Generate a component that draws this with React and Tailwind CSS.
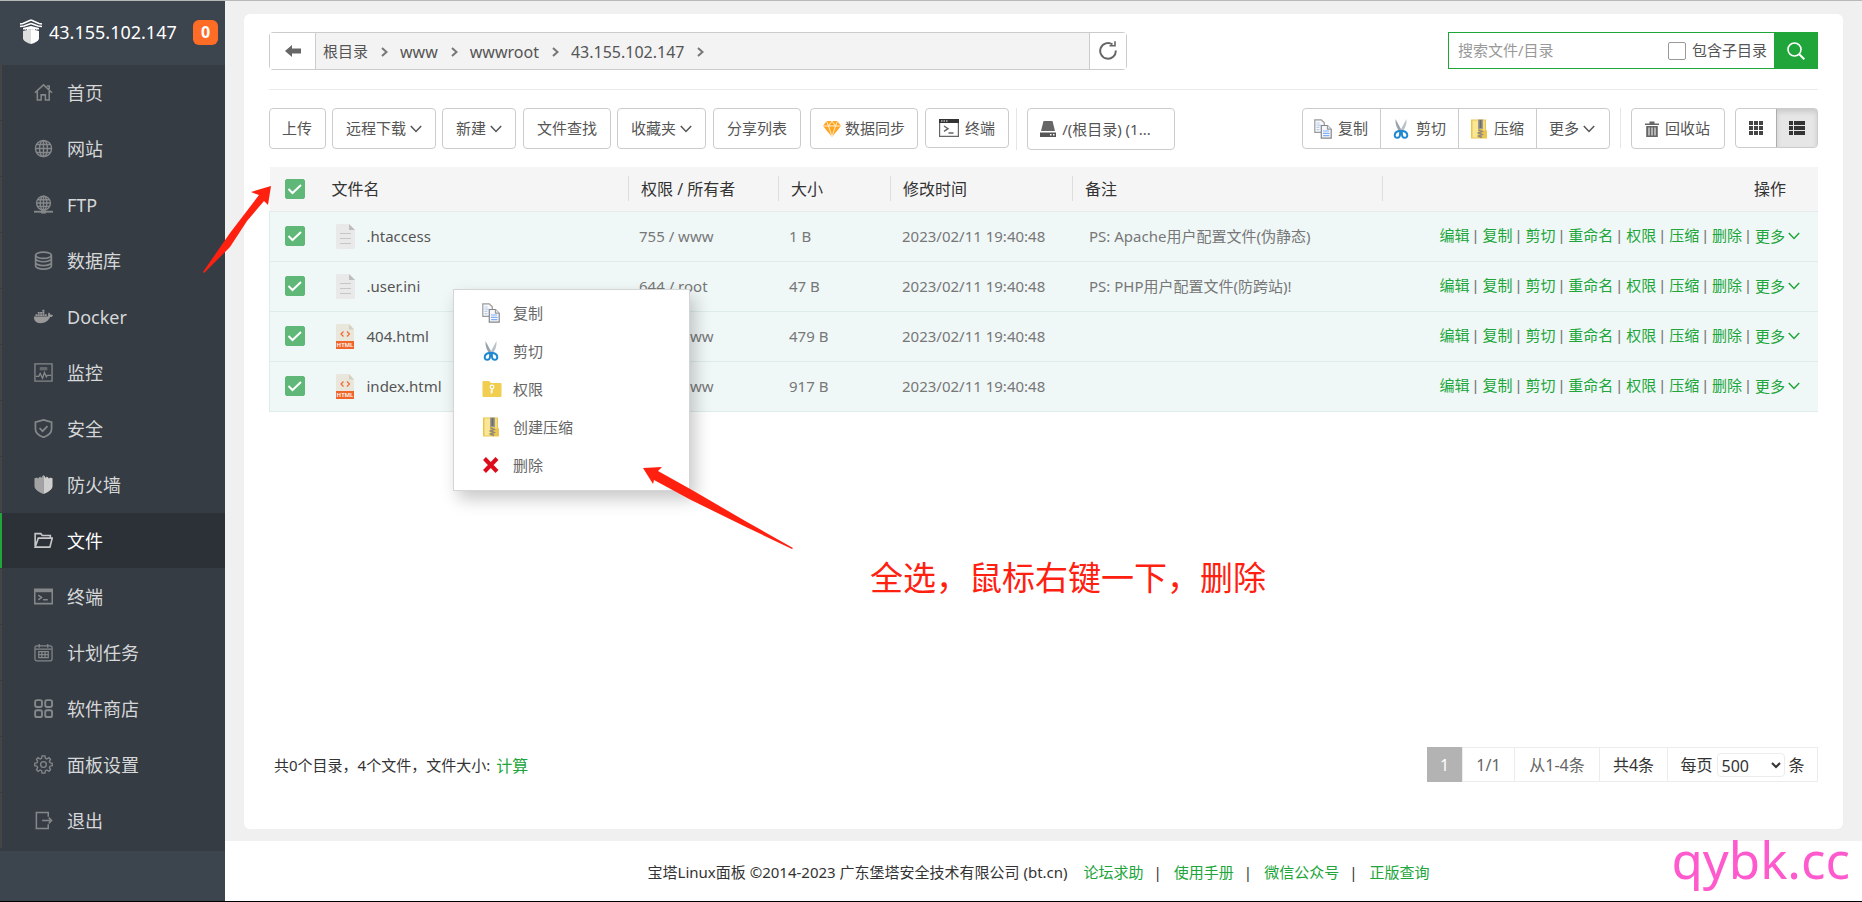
import { useState } from "react";
import clsx from "clsx";
import { FaDocker } from "react-icons/fa";

const line = { fill: "none", stroke: "currentColor", strokeWidth: 1.6 };

const menuIcons = {
  home: (
    <g {...line}>
      <path d="M1 10.2 10 2l9 8.2M3.500 8.500V18h4v-5.500h4.500V18h4V8.500M13.500 3.200h2.500v3" />
    </g>
  ),
  globe: (
    <g {...line} strokeWidth="1.500">
      <circle cx="10" cy="10" r="8.500" />
      <ellipse cx="10" cy="10" rx="4.200" ry="8.500" />
      <path d="M10 1.500v17M1.500 10h17M2.800 5.800h14.400M2.800 14.200h14.400" />
    </g>
  ),
  ftp: (
    <g {...line} strokeWidth="1.500">
      <circle cx="10" cy="8.500" r="7.300" />
      <ellipse cx="10" cy="8.500" rx="3.500" ry="7.300" />
      <path d="M10 1.200v15M2.700 8.500h14.600M3.800 5h12.400M3.800 12h12.400" />
      <path d="M0 17.600h20" strokeWidth="2" />
      <path d="M7.500 17.800h5" strokeWidth="3.500" />
    </g>
  ),
  database: (
    <g {...line} strokeWidth="1.800">
      <ellipse cx="10" cy="4.500" rx="8.300" ry="3.300" />
      <path d="M1.700 4.500v11.200c0 1.800 3.700 3.300 8.300 3.300s8.300-1.500 8.300-3.300V4.500M1.700 8c0 1.800 3.700 3.300 8.300 3.300s8.300-1.500 8.300-3.300M1.700 12c0 1.800 3.700 3.300 8.300 3.300s8.300-1.500 8.300-3.300" />
    </g>
  ),
  monitor: (
    <g {...line} strokeWidth="1.400">
      <path d="M1 1h18v18H1zM2 14h3l1.500-3 2.500 5 2-6 2 4.500 1-1.500h4" />
      <path d="M6 6h8" strokeWidth="3.500" opacity=".6" />
    </g>
  ),
  shield: (
    <g {...line} strokeWidth="1.800">
      <path d="M10 1 18.500 3.300v7.200c0 4-3.400 7-8.500 8.800-5.100-1.800-8.500-4.800-8.500-8.800V3.300zM5.800 9.500l3.200 3.300 5.200-5.300" />
    </g>
  ),
  firewall: (
    <>
      <path d="M10 0 8.500 1.500v1H7v-1l-2 1v1H3.500v-1L.500 3.500v8.500C1 15.500 6 18.500 10 20z" fill="#a3a3a3" />
      <path d="m10 0 1.500 1.500v1H13v-1l2 1v1h1.500v-1l3 1v8.500C19 15.500 14 18.500 10 20z" fill="#cfcfcf" />
    </>
  ),
  folder: (
    <g {...line} strokeWidth="1.700">
      <path d="M1.200 16V2.800h6l1.500 2h8.500v2.700M1.200 17 4.500 7.500h14.700L16.700 17H2z" />
    </g>
  ),
  terminal: (
    <g {...line}>
      <path d="M.8 2.500h18.400v15H.8z" />
      <path d="M1 4.200h18" strokeWidth="2.600" />
      <path d="m4.500 8.500 3.500 2.500-3.500 2.500M9.500 13.500h5" />
    </g>
  ),
  calendar: (
    <g {...line} strokeWidth="1.300">
      <rect x="1" y="3" width="18" height="15.800" rx="2" />
      <path d="M1.500 6.500h17M5.500 1v4M14.500 1v4M5 9h10v6.500H5zM5 12.200h10M8.300 9v6.500M11.700 9v6.500" />
    </g>
  ),
  store: (
    <g {...line} strokeWidth="2">
      <rect x="1.200" y="1.200" width="7.200" height="7.200" rx="2" />
      <rect x="11.800" y="1.200" width="7.200" height="7.200" rx="2" />
      <rect x="1.200" y="11.800" width="7.200" height="7.200" rx="2" />
      <rect x="11.800" y="11.800" width="7.200" height="7.200" rx="2" />
    </g>
  ),
  gear: (
    <g {...line} strokeWidth="1.400">
      <path d="m8.500 1-.5 2.500-1.500.7-2.200-1.400-1.700 1.700 1.200 2.200-.6 1.500L.800 8.700v2.600l2.400.5.6 1.500-1.200 2.200 1.700 1.700 2.200-1.400 1.500.7.5 2.500h3l.5-2.500 1.500-.7 2.200 1.400 1.700-1.700-1.200-2.200.6-1.500 2.400-.5V8.700l-2.400-.5-.6-1.500 1.200-2.200-1.700-1.700-2.200 1.400-1.500-.7-.5-2.500z" />
      <circle cx="10" cy="10" r="3" />
    </g>
  ),
  logout: (
    <g {...line}>
      <path d="M15 6V1.500H2.500v17H15V14M8.500 10H18M15.500 7l3 3-3 3" />
    </g>
  ),
};

const menu = [
  { icon: "home", text: "首页" },
  { icon: "globe", text: "网站" },
  { icon: "ftp", text: "FTP" },
  { icon: "database", text: "数据库" },
  { icon: "docker", text: "Docker" },
  { icon: "monitor", text: "监控" },
  { icon: "shield", text: "安全" },
  { icon: "firewall", text: "防火墙" },
  { icon: "folder", text: "文件" },
  { icon: "terminal", text: "终端" },
  { icon: "calendar", text: "计划任务" },
  { icon: "store", text: "软件商店" },
  { icon: "gear", text: "面板设置" },
  { icon: "logout", text: "退出" },
];

const files = [
  { name: ".htaccess", type: "text", owner: "755 / www", size: "1 B", time: "2023/02/11 19:40:48", ps: "PS: Apache用户配置文件(伪静态)" },
  { name: ".user.ini", type: "text", owner: "644 / root", size: "47 B", time: "2023/02/11 19:40:48", ps: "PS: PHP用户配置文件(防跨站)!" },
  { name: "404.html", type: "html", owner: "755 / www", size: "479 B", time: "2023/02/11 19:40:48", ps: "" },
  { name: "index.html", type: "html", owner: "755 / www", size: "917 B", time: "2023/02/11 19:40:48", ps: "" },
];

const actions = ["编辑", "复制", "剪切", "重命名", "权限", "压缩", "删除"];
const crumbs = ["根目录", "www", "wwwroot", "43.155.102.147"];
const footerLinks = ["论坛求助", "使用手册", "微信公众号", "正版查询"];

const Down = ({ className = "" }) => (
  <svg viewBox="0 0 12 8" className={clsx("h-2 w-3 shrink-0", className)} fill="none" stroke="currentColor" strokeWidth="1.500">
    <path d="m.8 1 5.200 5.500L11.200 1" />
  </svg>
);

const CopyIcon = () => (
  <svg viewBox="0 0 18 20" className="h-5 w-[18px] shrink-0" fill="#f6f8fc" stroke="#9a9a9a" strokeWidth="1.200">
    <path d="M.8.800h6.500l3 3v9.500H.8z" />
    <path d="M2.500 4h3M2.500 6.200h4M2.500 8.400h3M2.500 10.600h3" stroke="#b9cdf0" />
    <path d="M7.300 6.500h6.200l3.700 3.700v9H7.300z" stroke="#858585" />
    <path d="M13.500 6.500v3.700h3.700" />
    <path d="M9 12h6M9 14.300h6.500M9 16.600h6.500" stroke="#7fb0f5" />
  </svg>
);

const CutIcon = () => (
  <svg viewBox="0 0 18 20" className="h-5 w-[18px] shrink-0" fill="none">
    <path d="m3.500 0 6.500 12-2 1.500C5 9.500 3 5 3.500 0z" fill="#98a3ac" />
    <path d="M14.500 0 8 12l2 1.500c3-4 5-8.500 4.500-13.500z" fill="#b9c2c9" />
    <path d="M8.300 12c-2.600-.4-5.600 1.300-5.600 4.300 0 3.600 5 3.300 5.300-.3zM9.700 12c2.600-.4 5.600 1.300 5.600 4.300 0 3.600-5 3.300-5.300-.3z" stroke="#2088d0" strokeWidth="2" />
  </svg>
);

const ZipIcon = () => (
  <svg viewBox="0 0 18 20" className="h-5 w-[18px] shrink-0">
    <path d="M1 .500h15v10l1 1.500v7.500H1z" fill="#eac54f" />
    <path d="M2.500 1.500H8v17H2.500z" fill="#fbe694" />
    <path d="M13 1.500h2v10h-2z" fill="#f7dc7c" />
    <path d="M8 .500h5v9.500H8z" fill="#9b9b93" />
    <path d="M9.500 1h2v8h-2z" fill="#6d6d68" />
    <path d="m8.500 11 3.500 1.500-3.500 1.500 3.500 1.500L8.500 17l3.500 1.500" stroke="#8d897f" strokeWidth="1.500" fill="none" />
  </svg>
);

const PermIcon = () => (
  <svg viewBox="0 0 20 18" className="h-[18px] w-5 shrink-0">
    <path d="M.5 2C.5 1.300 1 1 1.500 1H7l2 2h9.500c.6 0 1 .4 1 1v12c0 .6-.4 1-1 1h-17c-.6 0-1-.4-1-1z" fill="#f1cd50" />
    <circle cx="10" cy="7" r="1.800" fill="none" stroke="#fff" strokeWidth="1.200" />
    <path d="M10 8.800V13M10 11.200H8.500M10 13H8.500" stroke="#fff" strokeWidth="1.200" />
  </svg>
);

const DelIcon = () => (
  <svg viewBox="0 0 18 18" className="size-[18px] shrink-0">
    <path d="m2.500 2.500 12.500 13M15 2.500 2.500 15.500" stroke="#dc0c1b" strokeWidth="4" />
  </svg>
);

const contextMenu = [
  { Icon: CopyIcon, text: "复制" },
  { Icon: CutIcon, text: "剪切" },
  { Icon: PermIcon, text: "权限" },
  { Icon: ZipIcon, text: "创建压缩" },
  { Icon: DelIcon, text: "删除" },
];

const FileIcon = ({ type }) =>
  type === "html" ? (
    <svg viewBox="0 0 19 25" className="h-[25px] w-[19px] shrink-0">
      <path d="M0 1 1 0h12l5 5.500V18H0z" fill="#e9e7dc" />
      <path d="m13 0 5 5.500h-5z" fill="#d3d0c2" />
      <path d="M7.500 7.500 5 10l2.500 2.500M11 7.500l2.500 2.500-2.500 2.500" fill="none" stroke="#ef6a33" strokeWidth="1.200" />
      <path d="M0 17h18v8H0z" fill="#f06529" />
      <text x="9" y="23.300" textAnchor="middle" fontSize="6" fontWeight="600" fill="#fff">HTML</text>
    </svg>
  ) : (
    <svg viewBox="0 0 19 25" className="h-[25px] w-[19px] shrink-0">
      <path d="M0 1 1 0h12l6 6v18l-1 1H1l-1-1z" fill="#e9e9e9" />
      <path d="m13 0 6 6h-6z" fill="#bdbdbd" />
      <path d="M4 9.500h11M4 14.500h11M4 19.500h11" stroke="#c6c6c6" />
    </svg>
  );

const Check = ({ label, checked, onChange }) => (
  <label className="grid size-5">
    <input
      type="checkbox"
      aria-label={label}
      checked={checked}
      onChange={onChange}
      className="col-start-1 row-start-1 size-5 appearance-none rounded-xs border border-gray-300 bg-white checked:border-[#5fb878] checked:bg-[#5fb878]"
    />
    <svg viewBox="0 0 20 20" className="pointer-events-none col-start-1 row-start-1 size-5" fill="none" stroke="#fff" strokeWidth="2">
      <path d="m3.500 10 4 4 8.500-8" />
    </svg>
  </label>
);

const ToolButton = ({ children, className = "h-[41px] px-[13px]" }) => (
  <button className={clsx("flex shrink-0 items-center rounded-sm border border-[#ccc] bg-white text-[#555]", className)}>
    {children}
  </button>
);

const Sidebar = () => (
  <aside className="w-[225px] shrink-0 bg-[#3c444d]">
    <div className="flex h-16 items-center pr-[7px] pb-0.5 pl-[19px] text-white">
      <svg viewBox="0 0 24 26" className="h-[26px] w-6 shrink-0">
        <path d="M12 1 4 4.500 1 5M12 1l8 3.500 3 .5M12 4.500 5 7 1 7.500M12 4.500 19 7l4 .5" fill="none" stroke="#fff" strokeWidth="1.600" />
        <path d="M12 7 4 9v2l1-1 1 1 2-1v1.500L12 10z" fill="#fff" />
        <path d="m12 7 8 2v2l-1-1-1 1-2-1v1.500L12 10z" fill="#fff" />
        <path d="m12 10-8 2v8c1 2.500 4.500 4 8 5z" fill="#ddd" />
        <path d="m12 10 8 2v8c-1 2.500-4.500 4-8 5z" fill="#fff" />
      </svg>
      <span className="ml-1.5 text-lg">43.155.102.147</span>
      <span className="ml-auto flex size-[25px] items-center justify-center rounded-md bg-[#ff6c26] text-base font-bold">0</span>
    </div>
    <nav className="bg-[#353c43] pb-0.5">
      {menu.map((item) => (
        <a
          key={item.text}
          href="#"
          className={clsx(
            "mb-px flex h-[55px] items-center gap-3.5 border-l-2 pl-8 text-lg",
            item.text === "文件" ? "border-[#20a53a] bg-[#2c3138] text-white" : "border-[#454545] text-[#d5d7d9]"
          )}
        >
          {item.icon === "docker" ? (
            <FaDocker className="size-[19px] text-[#999]" />
          ) : (
            <svg viewBox="0 0 20 20" className={clsx("size-[19px]", item.text === "文件" ? "text-[#c8c8c8]" : "text-[#85888a]")}>
              {menuIcons[item.icon]}
            </svg>
          )}
          {item.text}
        </a>
      ))}
    </nav>
  </aside>
);

const PathBar = () => (
  <div className="flex items-start justify-between border-b border-[#ebebeb] pb-[19px]">
    <div className="flex h-[38px] w-[858px] rounded-sm border border-[#ccc] bg-[#f3f3f3] text-base text-[#555]">
      <button aria-label="返回" className="flex w-[46px] items-center justify-center border-r border-[#ccc] bg-white pb-px">
        <svg viewBox="0 0 16 12" className="h-3 w-4" fill="#666">
          <path d="M7 0v3.500h9v5H7V12L0 6z" />
        </svg>
      </button>
      <div className="flex flex-1 items-center pt-px pl-[7px]">
        {crumbs.map((c) => (
          <span key={c} className="flex items-center">
            <a href="#" className={c === "根目录" ? "text-[15px]" : ""}>{c}</a>
            <svg viewBox="0 0 7 10" className="mr-3 ml-[13px] h-2.5 w-[7px]" fill="none" stroke="#777" strokeWidth="2">
              <path d="m1 1 4.500 4L1 9" />
            </svg>
          </span>
        ))}
      </div>
      <button aria-label="刷新" className="flex w-[37px] items-center justify-center border-l border-[#ccc] bg-white pb-px">
        <svg viewBox="0 0 18 19" className="h-[19px] w-[18px]" fill="none" stroke="#666" strokeWidth="2">
          <path d="M16.800 9.500A7.800 7.800 0 1 1 13.500 3.500" />
          <path d="M10.500 4.700H16V.3" strokeWidth="1.600" />
        </svg>
      </button>
    </div>
    <div className="flex h-[37px] w-[370px] border border-[#20a53a] text-[15px]">
      <input type="text" aria-label="搜索" placeholder="搜索文件/目录" className="min-w-0 flex-1 pl-[9px] outline-none placeholder:text-[#999]" />
      <label className="flex items-center gap-1.5 pr-[7px] text-[#555]">
        <input type="checkbox" className="size-[18px] appearance-none rounded-xs border border-[#999] bg-white" />
        包含子目录
      </label>
      <button aria-label="搜索" className="flex w-[43px] items-center justify-center bg-[#20a53a]">
        <svg viewBox="0 0 18 18" className="size-[18px]" fill="none" stroke="#fff" strokeWidth="1.600">
          <circle cx="7.500" cy="7.500" r="6.500" />
          <path d="m12 12 5.300 5.300" strokeWidth="2" />
        </svg>
      </button>
    </div>
  </div>
);

const Toolbar = () => (
  <div className="mt-[18px] flex h-[42px] items-start justify-between text-[15px]">
    <div className="flex gap-1.5">
      <ToolButton className="h-[41px] px-3">
        <span className="pr-px">上传</span>
      </ToolButton>
      <ToolButton>远程下载<Down className="ml-1" /></ToolButton>
      <ToolButton>新建<Down className="ml-1" /></ToolButton>
      <ToolButton className="ml-px h-[41px] px-[13px]">文件查找</ToolButton>
      <ToolButton>收藏夹<Down className="ml-1" /></ToolButton>
      <ToolButton className="ml-px h-[41px] px-[13px]">分享列表</ToolButton>
      <ToolButton className="ml-[3px] h-[41px] px-3">
        <svg viewBox="0 0 18 16" className="mr-1 h-4 w-[18px]">
          <path d="M3.500 0h11L18 5 9 16 0 5z" fill="#ffa51f" />
          <path d="M0 5h18M5.500 5 9 15.500 12.500 5M3.500 0l2 5L9 0l3.500 5 2-5" fill="none" stroke="#fff" strokeWidth=".8" />
        </svg>
        数据同步
      </ToolButton>
      <ToolButton className="ml-px h-10 px-[13px]">
        <svg viewBox="0 0 20 18" className="mr-1.5 h-[18px] w-5" fill="none" stroke="#666" strokeWidth="1.200">
          <path d="M.6.600h18.800v16.800H.6z" />
          <path d="M0 2h20" stroke="#333" strokeWidth="4" />
          <path d="M2 2h1.500M4.500 2H6M7 2h1.500" stroke="#fff" />
          <path d="m5 7 4 2.700-4 2.700M9.500 14h5" strokeWidth="1.400" />
        </svg>
        终端
      </ToolButton>
      <span className="ml-px h-[42px] w-px bg-[#e5e5e5]" />
      <ToolButton className="ml-1 h-[42px] w-[148px] px-3">
        <svg viewBox="0 0 16 16" className="mr-1.5 size-4">
          <path d="M3.500 0h9L15 10H1z" fill="#666" />
          <path d="M0 11.500h16V16H0z" fill="#555" />
          <path d="M10 13.700h1.500M13 13.700h1.500" stroke="#fff" strokeWidth="1.500" />
        </svg>
        /(根目录) (1...
      </ToolButton>
    </div>
    <div className="flex">
      <div className="flex h-[41px] divide-x divide-[#ccc] rounded-sm border border-[#ccc] text-[#555]">
        <button className="flex items-center gap-1.5 pr-3 pl-[11px]"><CopyIcon />复制</button>
        <button className="flex items-center gap-1.5 pr-3 pl-[11px]"><CutIcon />剪切</button>
        <button className="flex items-center gap-1.5 pr-3 pl-[11px]"><ZipIcon />压缩</button>
        <button className="flex items-center gap-1 pr-[14px] pl-3">更多<Down /></button>
      </div>
      <span className="mx-2.5 h-10 w-px bg-[#e5e5e5]" />
      <ToolButton className="h-[41px] px-[13px]">
        <svg viewBox="0 0 14 16" className="mr-1.5 h-4 w-3.5" fill="#666">
          <path d="M0 2.500h4.500V.500h5v2H14V4H0zM1.200 5h11.600v11H1.200z" />
          <path d="M4 6.500v8M7 6.500v8M10 6.500v8" stroke="#fff" />
        </svg>
        <span className="pr-px">回收站</span>
      </ToolButton>
      <div className="ml-2.5 flex h-10 rounded border border-[#ccc]">
        <button aria-label="图标视图" className="flex w-10 items-center justify-center pr-px">
          <svg viewBox="0 0 14 14" className="size-3.5" fill="#444">
            <path d="M0 0h4v4H0zM5 0h4v4H5zM10 0h4v4h-4zM0 5h4v4H0zM5 5h4v4H5zM10 5h4v4h-4zM0 10h4v4H0zM5 10h4v4H5zM10 10h4v4h-4z" />
          </svg>
        </button>
        <button aria-label="列表视图" className="flex w-[41px] items-center justify-center border-l border-[#adadad] bg-[#e6e6e6] shadow-[inset_0_3px_5px_rgba(0,0,0,0.125)]">
          <svg viewBox="0 0 16 14" className="h-3.5 w-4" fill="#333">
            <path d="M0 0h4v4H0zM5 0h11v4H5zM0 5h4v4H0zM5 5h11v4H5zM0 10h4v4H0zM5 10h11v4H5z" />
          </svg>
        </button>
      </div>
    </div>
  </div>
);

const Th = ({ children }) => (
  <th className="p-0 font-normal">
    <div className="flex h-[25px] items-center border-l border-[#ddd] pl-3">{children}</div>
  </th>
);

const FileTable = () => {
  const [checked, setChecked] = useState(files.map(() => true));

  const toggle = (idx) => setChecked(checked.map((c, i) => (i === idx ? !c : c)));
  const all = checked.every(Boolean);

  return (
    <table className="mt-[17px] w-full table-fixed border-collapse text-left text-[15px] text-[#777]">
      <colgroup>
        <col className="w-[50px]" />
        <col />
        <col className="w-[150px]" />
        <col className="w-[112px]" />
        <col className="w-[182px]" />
        <col className="w-[310px]" />
        <col className="w-[436px]" />
      </colgroup>
      <thead>
        <tr className="h-11 border-b border-[#e6eaea] bg-[#f5f5f5] text-base text-[#333]">
          <th className="p-0 pl-[15px]">
            <Check label="全选" checked={all} onChange={() => setChecked(files.map(() => !all))} />
          </th>
          <th className="p-0 pl-3 font-normal">文件名</th>
          <Th>权限 / 所有者</Th>
          <Th>大小</Th>
          <Th>修改时间</Th>
          <Th>备注</Th>
          <th className="p-0 font-normal">
            <div className="flex h-[25px] items-center justify-end border-l border-[#ddd] pr-8">操作</div>
          </th>
        </tr>
      </thead>
      <tbody>
        {files.map((file, idx) => (
          <tr key={file.name} className="h-[50px] border-b border-l border-[#deeceb] bg-[#f0f8f7]">
            <td className="p-0 pl-[15px]">
              <Check label={file.name} checked={checked[idx]} onChange={() => toggle(idx)} />
            </td>
            <td className="p-0 pl-4">
              <div className="flex items-center gap-3 text-[#555]">
                <FileIcon type={file.type} />
                {file.name}
              </div>
            </td>
            <td className="p-0 pl-[11px]">{file.owner}</td>
            <td className="p-0 pl-[11px]">{file.size}</td>
            <td className="p-0 pl-3">{file.time}</td>
            <td className="p-0 pl-[17px]">{file.ps}</td>
            <td className="p-0 pr-[18px]">
              <div className="flex items-center justify-end whitespace-nowrap">
                {actions.map((a) => (
                  <span key={a}>
                    <a href="#" className="text-[#20a53a]">{a}</a>
                    <span className="mr-[5px] ml-1 font-['Liberation_Sans']">|</span>
                  </span>
                ))}
                <a href="#" className="flex items-center gap-[3px] text-[#20a53a]">更多<Down /></a>
              </div>
            </td>
          </tr>
        ))}
      </tbody>
    </table>
  );
};

const Pager = () => (
  <div className="mt-auto flex items-center justify-between">
    <p className="flex items-center gap-1.5 pt-0.5 pl-[5px] text-[15px] text-[#333]">
      共0个目录，4个文件，文件大小:
      <a href="#" className="text-base text-[#20a53a]">计算</a>
    </p>
    <div className="flex h-[35px] text-base text-[#666]">
      <span className="flex w-[35px] items-center justify-center bg-[#b3b3b3] text-white">1</span>
      <div className="flex divide-x divide-[#ececec] border border-[#ececec]">
        <span className="flex w-[52px] items-center justify-center">1/1</span>
        <span className="flex w-[85px] items-center justify-center">从1-4条</span>
        <span className="flex w-[68px] items-center justify-center text-[#333]">共4条</span>
        <label className="flex w-[149px] items-center justify-center gap-1 text-[#333]">
          每页
          <select defaultValue="500" className="h-6 w-[68px] rounded border border-[#ececec] bg-white">
            <option>100</option>
            <option>200</option>
            <option>500</option>
          </select>
          条
        </label>
      </div>
    </div>
  </div>
);

const ContextMenu = () => (
  <ul className="absolute top-[288px] left-[453px] w-[237px] border border-[#d5d5d5] bg-white pt-1 pb-1.5 text-[15px] text-[#666] shadow-[5px_8px_16px_rgba(0,0,0,0.22)]">
    {contextMenu.map(({ Icon, text }) => (
      <li key={text}>
        <button className="flex h-[38px] w-full items-center pl-7">
          <span className="flex w-[31px]"><Icon /></span>
          {text}
        </button>
      </li>
    ))}
  </ul>
);

const Notes = () => (
  <div className="pointer-events-none">
    <svg viewBox="0 0 68 87" className="absolute top-[185px] left-[203px] h-[87px] w-[68px]" fill="#ff2010">
      <path d="M68 0 48 6l8 3-29 38L0 86l1 1 26-26 17-26 17-20 4 4z" />
    </svg>
    <svg viewBox="0 0 150 82" className="absolute top-[466px] left-[643px] h-[82px] w-[150px]" fill="#ff2010">
      <path d="m0 1 19-1-4 4 34 19 55 32 46 26-1 1-46-22-55-27-37-20-1 4z" />
    </svg>
    <p className="absolute top-[552px] left-[870px] text-[33px] leading-[50px] whitespace-nowrap text-[#ff2010]">
      全选，鼠标右键一下，删除
    </p>
    <p className="absolute right-3 bottom-3 text-[51px] leading-[60px] text-[#ff5acd]">qybk.cc</p>
  </div>
);

const App = () => {
  return (
    <div className="relative flex min-h-screen border-t border-b border-t-[#b8b8b8] border-b-black bg-[#f0f0f0] font-['Noto_Sans','Noto_Sans_CJK_SC',sans-serif]">
      <Sidebar />
      <div className="flex min-w-0 flex-1 flex-col">
        <main className="mx-[19px] mt-[13px] mb-3 flex flex-1 flex-col rounded-md bg-white px-[25px] pt-[18px] pb-[47px]">
          <PathBar />
          <Toolbar />
          <FileTable />
          <Pager />
        </main>
        <footer className="flex h-[60px] items-center justify-center bg-white pt-0.5 pr-2.5 text-[15px] text-[#333]">
          <span className="mr-4">宝塔Linux面板 ©2014-2023 广东堡塔安全技术有限公司 (bt.cn)</span>
          {footerLinks.map((link, idx) => (
            <span key={link}>
              {idx > 0 && <span className="mr-3 ml-2.5">|</span>}
              <a href="#" className="text-[#20a53a]">{link}</a>
            </span>
          ))}
        </footer>
      </div>
      <ContextMenu />
      <Notes />
    </div>
  );
};

export default App;
